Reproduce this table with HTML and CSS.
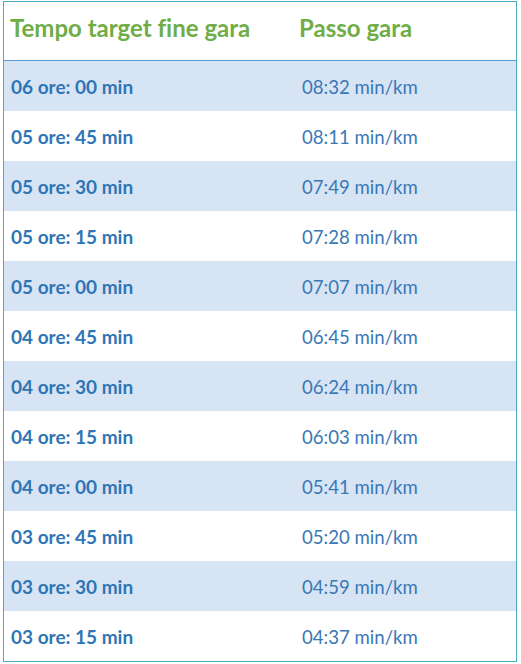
FILE: index.html
```html
<!DOCTYPE html>
<html lang="it">
<head>
<meta charset="utf-8">
<link rel="stylesheet" href="styles.css">
</head>
<body>
<div class="table">
  <div class="head">
    <div class="c1">Tempo target fine gara</div>
    <div class="c2">Passo gara</div>
  </div>
  <div class="row alt"><div class="c1">06 ore: 00 min</div><div class="c2">08:32 min/km</div></div>
  <div class="row"><div class="c1">05 ore: 45 min</div><div class="c2">08:11 min/km</div></div>
  <div class="row alt"><div class="c1">05 ore: 30 min</div><div class="c2">07:49 min/km</div></div>
  <div class="row"><div class="c1">05 ore: 15 min</div><div class="c2">07:28 min/km</div></div>
  <div class="row alt"><div class="c1">05 ore: 00 min</div><div class="c2">07:07 min/km</div></div>
  <div class="row"><div class="c1">04 ore: 45 min</div><div class="c2">06:45 min/km</div></div>
  <div class="row alt"><div class="c1">04 ore: 30 min</div><div class="c2">06:24 min/km</div></div>
  <div class="row"><div class="c1">04 ore: 15 min</div><div class="c2">06:03 min/km</div></div>
  <div class="row alt"><div class="c1">04 ore: 00 min</div><div class="c2">05:41 min/km</div></div>
  <div class="row"><div class="c1">03 ore: 45 min</div><div class="c2">05:20 min/km</div></div>
  <div class="row alt"><div class="c1">03 ore: 30 min</div><div class="c2">04:59 min/km</div></div>
  <div class="row"><div class="c1">03 ore: 15 min</div><div class="c2">04:37 min/km</div></div>
</div>
</body>
</html>
```
FILE: styles.css
```css
html, body {
  margin: 0;
  padding: 0;
  background: #ffffff;
}
body {
  font-family: Lato, "Open Sans", "Liberation Sans", sans-serif;
  font-variant-ligatures: none;
}
.table {
  margin: 1px 0 0 3px;
  width: 514px;
  box-sizing: border-box;
  border: 1px solid #4bacc6;
}
.head {
  display: grid;
  grid-template-columns: 289px 1fr;
  align-items: center;
  height: 50px;
  padding-bottom: 8px;
  border-bottom: 1px solid #5b9bd5;
  padding-left: 6px;
  color: #70ad47;
  font-weight: 700;
  font-size: 24px;
  box-sizing: content-box;
}
.row {
  display: grid;
  grid-template-columns: 291px 1fr;
  align-items: center;
  height: 50px;
  padding-left: 7px;
  padding-top: 1px;
  box-sizing: border-box;
  color: #2e75b6;
}
.row.alt {
  background: #d6e4f4;
}
.row .c1 {
  font-weight: 700;
  font-size: 19px;
}
.row .c2 {
  color: #3a78b6;
  font-size: 18.6px;
}
```
